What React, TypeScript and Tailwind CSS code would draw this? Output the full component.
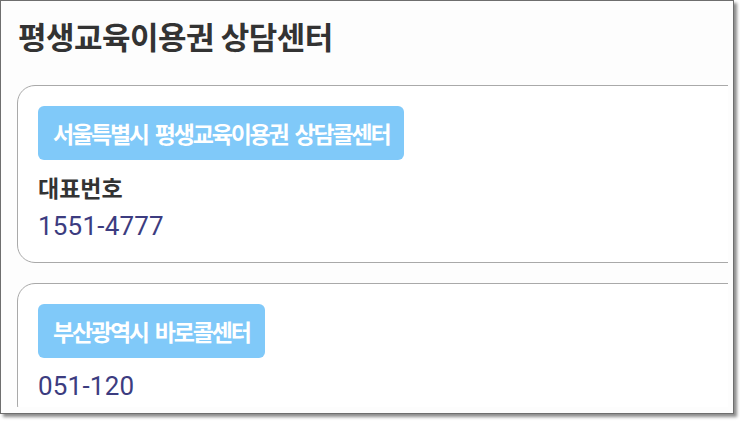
const centers = [
    { name: '서울특별시 평생교육이용권 상담콜센터', label: '대표번호', phone: '1551-4777' },
    { name: '부산광역시 바로콜센터', label: '', phone: '051-120' },
];

export default function App() {
    return (
        <div className="w-[740px] h-[421px] bg-white" style={{ fontFamily: '"Noto Sans CJK KR", "Noto Sans", sans-serif' }}>
            <div className="w-[734px] h-[414px] bg-[#fdfdfd] border border-[#6e6e6e] shadow-[3px_3px_3px_rgba(0,0,0,0.45)]">
                <div className="w-[727px] h-[406px] overflow-hidden">
                    <h1 className="pl-[17px] pt-[14px] h-[84px] text-[31px] leading-[42px] font-bold text-[#333] tracking-[-0.5px]">
                        평생교육이용권 상담센터
                    </h1>
                    <div className="pl-[16px] flex flex-col gap-[20px]">
                        {centers.map((c) => (
                            <div key={c.phone} className="w-[800px] border border-[#a9a9a9] rounded-[18px] bg-white px-[20px] pt-[20px] pb-[20px]">
                                <div className="inline-flex items-center h-[54px] px-[15px] rounded-[6px] bg-[#80c9f9] text-white text-[23px] font-bold tracking-[-2.2px] [word-spacing:4px]">
                                    {c.name}
                                </div>
                                {c.label ? (
                                    <div className="mt-[12px] text-[23px] leading-[30px] font-bold text-[#333]">
                                        {c.label}
                                    </div>
                                ) : null}
                                <div
                                    className={`${c.label ? 'mt-[8px]' : 'mt-[12px]'} text-[26px] leading-[32px] text-[#3c3c80] tracking-[0.2px]`}
                                    style={{ fontFamily: 'Roboto, "Noto Sans CJK KR", sans-serif' }}
                                >
                                    {c.phone}
                                </div>
                            </div>
                        ))}
                    </div>
                </div>
            </div>
        </div>
    );
}
